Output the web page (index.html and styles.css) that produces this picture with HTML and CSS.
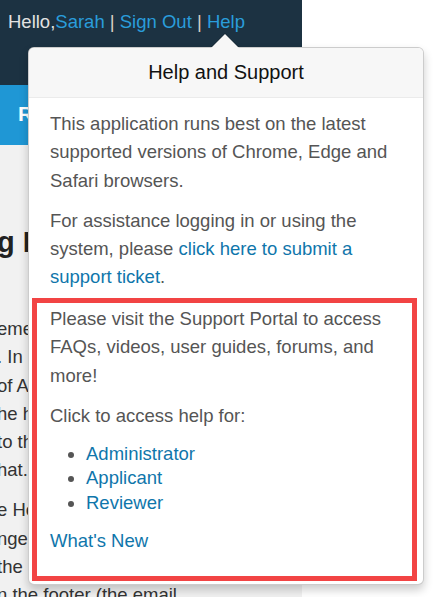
FILE: index.html
```html
<!DOCTYPE html>
<html lang="en">
<head>
  <meta charset="UTF-8">
  <meta name="viewport" content="width=device-width, initial-scale=1.0">
  <title>Help and Support</title>
  <link rel="stylesheet" href="styles.css">
</head>
<body>
  <div class="page">
    <!-- Top bar -->
    <div class="topbar">
      <span class="greeting">Hello,</span><a href="#">Sarah</a>
      <span class="sep">|</span> <a href="#">Sign Out</a>
      <span class="sep">|</span> <a href="#">Help</a>
    </div>

    <div class="menubar">
      <span class="menu-item">R</span>
    </div>

    <!-- Page content, mostly hidden behind the popover -->
    <div class="content">
      <h2>g In</h2>
      <p>
        eme<br>
        . In<br>
        of Ac<br>
        he h<br>
        to th<br>
        hat.
      </p>
      <p>
        e He<br>
        nge<br>
        the<br>
        n the footer (the email
      </p>
    </div>
  </div>

  <!-- Help popover -->
  <div class="popover">
    <div class="popover-title">Help and Support</div>
    <div class="popover-body">
      <div class="intro">
        <p>This application runs best on the latest supported versions of Chrome, Edge and Safari browsers.</p>
        <p>For assistance logging in or using the system, please <a href="#">click here to submit a support ticket</a>.</p>
      </div>

      <div class="portal">
        <p>Please visit the Support Portal to access FAQs, videos, user guides, forums, and more!</p>
        <p>Click to access help for:</p>
        <ul>
          <li><a href="#">Administrator</a></li>
          <li><a href="#">Applicant</a></li>
          <li><a href="#">Reviewer</a></li>
        </ul>
        <p><a href="#">What's New</a></p>
      </div>
    </div>
  </div>
</body>
</html>
```

FILE: styles.css
```css
body {
  font-family: "Liberation Sans", Arial, sans-serif;
  margin: 0;
  background-color: #fff;
  overflow: hidden;
}

a {
  text-decoration: none;
}

.page {
  width: 302px;
  min-height: 597px;
  background-color: #f1f1f1;
}

.topbar {
  height: 85px;
  box-sizing: border-box;
  padding: 10px 8px 0;
  background-color: #1c3242;
  color: #e2e2e2;
  font-size: 18.5px;
  line-height: 24px;
  white-space: nowrap;
}

.topbar a {
  color: #2a9ddb;
}

.topbar .sep {
  color: #d8d0c4;
}

.menubar {
  height: 60px;
  box-sizing: border-box;
  padding: 17px 18px 0;
  background-color: #1f97d5;
}

.menu-item {
  color: #fff;
  font-weight: bold;
  font-size: 21px;
}

.content {
  margin-left: -3px;
  padding-top: 80px;
  color: #333;
  font-size: 18.5px;
  line-height: 28.3px;
  white-space: nowrap;
}

.content h2 {
  margin: 0 0 56px;
  color: #222;
  font-size: 29px;
  line-height: 34px;
}

.content p {
  margin: 0 0 11.7px;
}

/* Help popover */
.popover {
  position: absolute;
  top: 47px;
  left: 28px;
  width: 396px;
  box-sizing: border-box;
  padding-bottom: 3px;
  background-color: #fff;
  border: 1px solid rgba(0, 0, 0, 0.2);
  border-radius: 6px;
  box-shadow: 0 5px 10px rgba(0, 0, 0, 0.2);
}

.popover::before {
  content: "";
  position: absolute;
  top: -15px;
  left: 182px;
  border-left: 14px solid transparent;
  border-right: 14px solid transparent;
  border-bottom: 14px solid rgba(0, 0, 0, 0.2);
}

.popover::after {
  content: "";
  position: absolute;
  top: -14px;
  left: 182px;
  border-left: 14px solid transparent;
  border-right: 14px solid transparent;
  border-bottom: 14px solid #f7f7f7;
}

.popover-title {
  height: 49px;
  line-height: 49px;
  text-align: center;
  font-size: 20px;
  color: #111;
  background-color: #f7f7f7;
  border-bottom: 1px solid #ebebeb;
  border-radius: 5px 5px 0 0;
}

.popover-body {
  padding: 12px 21px 0;
  color: #555;
  font-size: 18.5px;
  line-height: 28.3px;
}

.popover-body a {
  color: #0f76ab;
}

.popover-body p {
  margin: 0 0 11.7px;
}

.intro p:last-child {
  margin-bottom: 6.7px;
}

.portal {
  margin: 0 -15px 0 -18px;
  padding: 2px 15px 9px 13px;
  border: 5px solid #f24444;
}

.portal ul {
  margin: 0 0 11.7px;
  padding-left: 36px;
  line-height: 24.5px;
}
```
